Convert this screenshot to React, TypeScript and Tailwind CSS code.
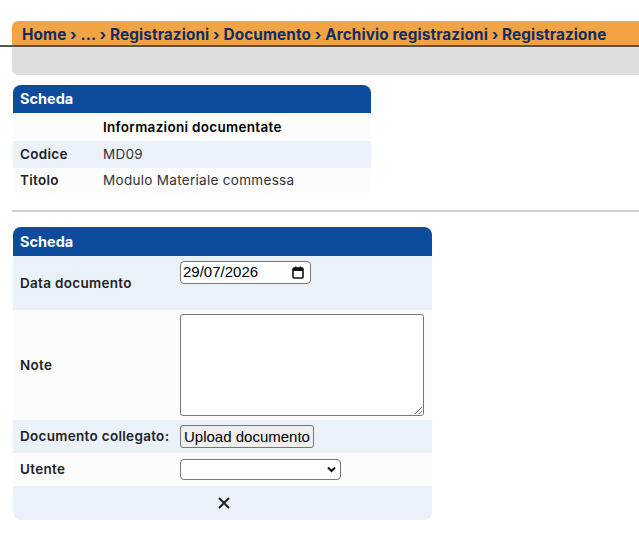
import { useState } from "react";

const crumbs = ["Home", "...", "Registrazioni", "Documento", "Archivio registrazioni", "Registrazione"];

function CalendarIcon() {
    return (
        <svg width="12" height="13" viewBox="0 0 12 13" fill="none">
            <rect x="1" y="2" width="10" height="10" rx="1" stroke="#111" strokeWidth="1.6" />
            <rect x="1" y="2" width="10" height="3" fill="#111" />
            <rect x="3" y="0.5" width="1.5" height="2.5" fill="#111" />
            <rect x="7.5" y="0.5" width="1.5" height="2.5" fill="#111" />
        </svg>
    );
}

export default function App() {
    const [note, setNote] = useState("");

    return (
        <div className="w-[639px] h-[540px] bg-white overflow-hidden font-['Inter',sans-serif] text-[#222]">
            {/* breadcrumb */}
            <div className="pt-[21px]">
                <div className="ml-3 h-6 bg-[#f2a444] rounded-tl-md pl-[10px] pt-[3px] flex items-center">
                    <span className="text-[15.3px] font-bold text-[#0f2d63] tracking-[0.12px] whitespace-nowrap leading-none">
                        {crumbs.join(" › ")}
                    </span>
                </div>
                <div className="h-[2px] bg-[#555]" />
                <div className="ml-3 h-7 bg-[#dedede] rounded-bl-md" />
            </div>

            {/* scheda informazioni */}
            <div className="mt-[10px] ml-[13px] w-[358px] rounded-lg overflow-hidden">
                <div className="h-7 bg-[#0d4c9c] px-[7px] flex items-center text-white text-[14.5px] font-bold">Scheda</div>
                <div className="grid grid-cols-[90px_1fr] text-[13.5px] tracking-[0.3px]">
                    <div className="h-7 bg-[#fcfcfc]" />
                    <div className="h-7 bg-[#fcfcfc] flex items-center font-semibold text-black">Informazioni documentate</div>
                    <div className="h-[27px] bg-[#eaf1f9] flex items-center pl-[7px] font-semibold">Codice</div>
                    <div className="h-[27px] bg-[#eaf1f9] flex items-center text-[#333]">MD09</div>
                    <div className="h-[25px] bg-[#fcfcfc] flex items-center pl-[7px] font-semibold">Titolo</div>
                    <div className="h-[25px] bg-[#fcfcfc] flex items-center text-[#333]">Modulo Materiale commessa</div>
                </div>
            </div>

            <div className="mt-[17px] ml-3 h-[2px] bg-[#cccccc]" />

            {/* scheda form */}
            <div className="mt-[15px] ml-[13px] w-[419px] rounded-lg overflow-hidden">
                <div className="h-[29px] bg-[#0d4c9c] px-[7px] flex items-center text-white text-[14.5px] font-bold">Scheda</div>
                <div className="grid grid-cols-[167px_1fr] text-[13.5px] tracking-[0.3px] font-semibold">
                    <div className="h-[54px] bg-[#eaf1f9] flex items-center pl-[7px]">Data documento</div>
                    <div className="h-[54px] bg-[#eaf1f9] pt-[5px]">
                        <div className="w-[131px] h-[23px] border border-[#767676] rounded-[4px] bg-white flex items-center justify-between pl-[2px] pr-[6px] font-['Liberation_Sans',sans-serif] font-normal tracking-normal text-[15px] text-black">
                            <span>29/07/2026</span>
                            <CalendarIcon />
                        </div>
                    </div>

                    <div className="h-[110px] bg-[#fcfcfc] flex items-center pl-[7px]">Note</div>
                    <div className="h-[110px] bg-[#fcfcfc] pt-1">
                        <textarea
                            value={note}
                            onChange={(e) => setNote(e.target.value)}
                            className="block w-[244px] h-[102px] border border-[#767676] rounded-[3px] bg-white"
                        />
                    </div>

                    <div className="h-[33px] bg-[#eaf1f9] flex items-center pl-[7px]">Documento collegato:</div>
                    <div className="h-[33px] bg-[#eaf1f9] flex items-center">
                        <button className="h-[23px] px-[3px] border border-[#767676] rounded-[3px] bg-[#efefef] font-['Liberation_Sans',sans-serif] font-normal tracking-normal text-[15px] text-black leading-none">
                            Upload documento
                        </button>
                    </div>

                    <div className="h-[33px] bg-[#fcfcfc] flex items-center pl-[7px]">Utente</div>
                    <div className="h-[33px] bg-[#fcfcfc] flex items-center">
                        <div className="relative w-[161px] h-[21px]">
                            <select className="appearance-none w-full h-full border border-[#767676] rounded-[4px] bg-white" />
                            <svg className="absolute right-[5px] top-[7px] pointer-events-none" width="9" height="7" viewBox="0 0 9 7">
                                <path d="M1 1.5 L4.5 5 L8 1.5" stroke="#111" strokeWidth="2" fill="none" />
                            </svg>
                        </div>
                    </div>
                </div>
                <div className="h-[34px] bg-[#eaf1f9] flex items-center justify-center">
                    <svg width="14" height="14" viewBox="0 0 14 14" className="ml-[2px]">
                        <path d="M2 2 L12 12 M12 2 L2 12" stroke="#222" strokeWidth="2" />
                    </svg>
                </div>
            </div>
        </div>
    );
}
